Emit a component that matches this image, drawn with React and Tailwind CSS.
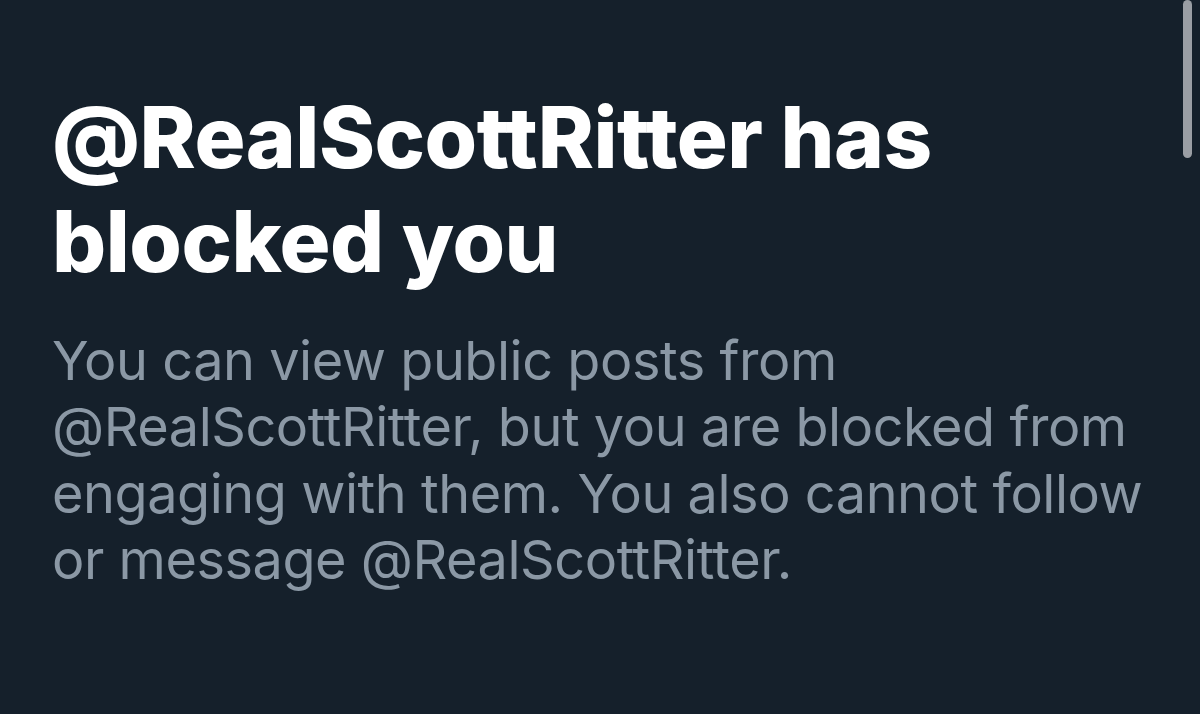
export default function App() {
  return (
    <div className="relative h-[714px] w-[1200px] overflow-hidden bg-[#15202b]" style={{ fontFamily: 'Inter, "Noto Sans", sans-serif' }}>
      <div className="absolute right-[8px] top-0 h-[158px] w-[9px] rounded-full bg-[#9a9ea4]" />
      <div className="pl-[52px] pr-[36px] pt-[86px]">
        <h1 className="text-[85px] font-extrabold leading-[104px] tracking-[-0.5px] text-white">
          @RealScottRitter has blocked you
        </h1>
        <p className="mt-[34px] text-[54px] leading-[66.3px] tracking-[-0.45px] text-[#8b98a5]">
          You can view public posts from @RealScottRitter, but you are blocked from engaging with them. You also cannot follow or message @RealScottRitter.
        </p>
      </div>
    </div>
  );
}
